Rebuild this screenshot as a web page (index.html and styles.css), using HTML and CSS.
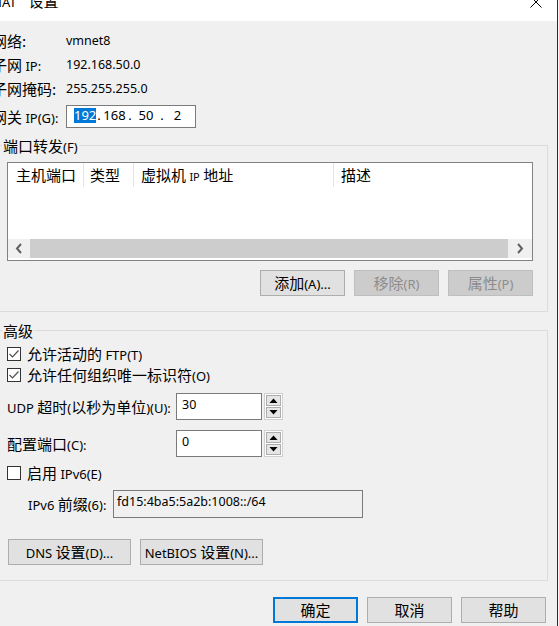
FILE: index.html
```html
<!DOCTYPE html>
<html lang="zh-CN">
<head>
<meta charset="utf-8">
<title>NAT 设置</title>
<link rel="stylesheet" href="styles.css">
</head>
<body>
<div class="window">
  <div class="titlebar">
    <div class="title"><span class="l">NAT</span><span class="tz">设置</span></div>
    <svg class="close" viewBox="0 0 12 12"><path d="M0.5 0.5L11.5 11.5M11.5 0.5L0.5 11.5" stroke="#000" stroke-width="1" fill="none"/></svg>
  </div>
  <div class="content">
    <div class="info">
      <div class="row"><span class="lab">网络:</span><span class="v">vmnet8</span></div>
      <div class="row"><span class="lab">子网 <span class="l">IP:</span></span><span class="v">192.168.50.0</span></div>
      <div class="row"><span class="lab">子网掩码:</span><span class="v">255.255.255.0</span></div>
      <div class="row gw">
        <span class="lab">网关 <span class="l">IP(G):</span></span>
        <div class="ipbox">
          <span class="ipf f1">192</span><span class="ipf dot">.</span><span class="ipf f2">168</span><span class="ipf dot">.</span><span class="ipf f3">50</span><span class="ipf dot">.</span><span class="ipf f4">2</span>
        </div>
      </div>
    </div>

    <fieldset class="group g1">
      <legend>端口转发<span class="l">(F)</span></legend>
      <div class="inner">
        <div class="list">
          <div class="lh">
            <div class="col c1">主机端口</div>
            <div class="col c2">类型</div>
            <div class="col c3">虚拟机 <span class="l ip">IP</span> 地址</div>
            <div class="col c4">描述</div>
          </div>
          <div class="lbody"></div>
          <div class="hscroll">
            <div class="sbtn"><svg width="8" height="11" viewBox="0 0 8 11"><path d="M6 1L2 5.5L6 10" stroke="#606060" stroke-width="2" fill="none"/></svg></div>
            <div class="thumb"></div>
            <div class="sbtn r"><svg width="8" height="11" viewBox="0 0 8 11"><path d="M2 1L6 5.5L2 10" stroke="#606060" stroke-width="2" fill="none"/></svg></div>
          </div>
        </div>
        <div class="btnrow">
          <button class="btn">添加<span class="l">(A)...</span></button>
          <button class="btn dis">移除<span class="l">(R)</span></button>
          <button class="btn dis">属性<span class="l">(P)</span></button>
        </div>
      </div>
    </fieldset>

    <fieldset class="group g2">
      <legend>高级</legend>
      <div class="inner">
        <div class="chk">
          <svg viewBox="0 0 14 14"><rect x="0.5" y="0.5" width="13" height="13" fill="#fff" stroke="#333"/><path d="M2.5 7L5.5 10L11.5 3.5" fill="none" stroke="#505050" stroke-width="1.2"/></svg>
          <span>允许活动的 <span class="l">FTP(T)</span></span>
        </div>
        <div class="chk">
          <svg viewBox="0 0 14 14"><rect x="0.5" y="0.5" width="13" height="13" fill="#fff" stroke="#333"/><path d="M2.5 7L5.5 10L11.5 3.5" fill="none" stroke="#505050" stroke-width="1.2"/></svg>
          <span>允许任何组织唯一标识符<span class="l">(O)</span></span>
        </div>
        <div class="srow">
          <span class="slab"><span class="l">UDP</span> 超时<span class="l">(</span>以秒为单位<span class="l">)(U):</span></span>
          <div class="num v">30</div>
          <div class="spin">
            <div class="sb"><svg width="9" height="5" viewBox="0 0 9 5"><path d="M0.5 5L4.5 0.5L8.5 5Z" fill="#000"/></svg></div>
            <div class="sb"><svg width="9" height="5" viewBox="0 0 9 5"><path d="M0.5 0L4.5 4.5L8.5 0Z" fill="#000"/></svg></div>
          </div>
        </div>
        <div class="srow">
          <span class="slab">配置端口<span class="l">(C):</span></span>
          <div class="num v">0</div>
          <div class="spin">
            <div class="sb"><svg width="9" height="5" viewBox="0 0 9 5"><path d="M0.5 5L4.5 0.5L8.5 5Z" fill="#000"/></svg></div>
            <div class="sb"><svg width="9" height="5" viewBox="0 0 9 5"><path d="M0.5 0L4.5 4.5L8.5 0Z" fill="#000"/></svg></div>
          </div>
        </div>
        <div class="chk v6">
          <svg viewBox="0 0 14 14"><rect x="0.5" y="0.5" width="13" height="13" fill="#fff" stroke="#333"/></svg>
          <span>启用 <span class="l">IPv6(E)</span></span>
        </div>
        <div class="prow">
          <span class="plab"><span class="l">IPv6</span> 前缀<span class="l">(6):</span></span>
          <div class="pinput v">fd15:4ba5:5a2b:1008::/64</div>
        </div>
        <div class="btnrow2">
          <button class="btn wide"><span class="l">DNS</span> 设置<span class="l">(D)...</span></button>
          <button class="btn wide"><span class="l">NetBIOS</span> 设置<span class="l">(N)...</span></button>
        </div>
      </div>
    </fieldset>

    <div class="footer">
      <button class="btn def">确定</button>
      <button class="btn">取消</button>
      <button class="btn">帮助</button>
    </div>
  </div>
</div>
</body>
</html>
```

FILE: styles.css
```css
* { box-sizing: border-box; }
html, body { margin: 0; padding: 0; }
body {
  width: 559px;
  height: 626px;
  overflow: hidden;
  background: #f8f8f8;
  font-family: "Noto Sans CJK SC", "Noto Sans", sans-serif;
  font-size: 15px;
  color: #000;
}
/* latin runs inside CJK labels */
.l {
  font-family: "Noto Sans", "Noto Sans CJK SC", sans-serif;
  font-size: 13px;
  line-height: 1;
}
/* latin values */
.v {
  font-family: "Noto Sans", "Noto Sans CJK SC", sans-serif;
  font-size: 12.5px;
}
.window {
  width: 558px;
  height: 626px;
  background: #f0f0f0;
  border-right: 1px solid #2b2b2b;
  overflow: hidden;
}
.titlebar {
  height: 21px;
  background: #fff;
  display: flex;
  align-items: flex-start;
}
.title {
  margin: -7px 0 0 -8px;
  line-height: 15px;
  white-space: nowrap;
}
.title .tz { margin-left: 12px; }
.close {
  flex: none;
  width: 12px;
  height: 12px;
  margin: -4px 15px 0 auto;
}

/* info */
.info { padding-top: 8px; margin-left: -8px; }
.row {
  display: flex;
  align-items: center;
  height: 24px;
  line-height: 24px;
}
.lab { width: 74px; flex: none; white-space: nowrap; }
.row.gw { margin-top: 4px; height: 23px; }
.ipbox {
  width: 130px;
  height: 23px;
  border: 1px solid #7a7a7a;
  background: #fff;
  display: flex;
  align-items: flex-start;
  padding: 2px 0 0 7px;
}
.ipf {
  font-family: "Noto Sans", sans-serif;
  font-size: 13px;
  line-height: 15px;
  text-align: center;
}
.f1 { width: 22px; background: #0078d7; color: #fff; }
.dot { width: 6px; }
.f2 { width: 25px; }
.f3 { width: 26px; }
.f4 { width: 25px; }

/* group boxes */
.group {
  margin: 0 9px 0 -6px;
  padding: 8px 14px 15px 7px;
  border: 1px solid #dcdcdc;
  min-width: 0;
}
.group legend {
  padding: 0 1px;
  height: 17px;
  line-height: 17px;
}
.g1 { margin-top: 9px; }
.g2 { margin-top: 10px; padding-top: 4px; }
.inner { margin-left: 5px; }

/* list view */
.list {
  height: 99px;
  border: 1px solid #828282;
  background: #fff;
  display: flex;
  flex-direction: column;
}
.lh { display: flex; height: 24px; flex: none; line-height: 24px; }
.col {
  border-right: 1px solid #e5e5e5;
  padding-left: 7px;
  white-space: nowrap;
  flex: none;
}
.c1 { width: 76px; padding-left: 8px; }
.c2 { width: 50px; padding-left: 6px; }
.c3 { width: 200px; }
.c4 { flex: 1; border-right: 0; }
.ip { font-size: 11px; }
.lbody { height: 52px; flex: none; }
.hscroll { display: flex; height: 19px; flex: none; }
.sbtn {
  width: 22px;
  background: #f0f0f0;
  display: flex;
  align-items: center;
  justify-content: center;
}
.sbtn.r { width: 24px; }
.thumb { flex: 1; background: #cdcdcd; }

/* buttons */
.btn {
  width: 85px;
  height: 26px;
  padding: 0;
  margin: 0;
  border: 1px solid #adadad;
  background: #e1e1e1;
  color: #000;
  font: inherit;
  line-height: 22px;
  text-align: center;
  white-space: nowrap;
}
.btn.dis { background: #cccccc; border-color: #bfbfbf; color: #8c8c8c; }
.btn.def { border: 2px solid #0078d7; }
.btn.wide { width: 123px; }
.btnrow {
  display: flex;
  justify-content: flex-end;
  gap: 9px;
  margin-top: 9px;
}

/* checkboxes */
.chk {
  display: flex;
  align-items: center;
  gap: 6px;
  height: 21px;
  line-height: 21px;
}
.chk svg { width: 14px; height: 14px; flex: none; }
.chk.v6 { margin-top: 5px; }

/* spin rows */
.srow {
  display: flex;
  align-items: center;
  height: 27px;
  margin-top: 8px;
}
.srow + .srow { margin-top: 10px; }
.slab { width: 169px; flex: none; white-space: nowrap; line-height: 20px; }
.num {
  width: 86px;
  height: 27px;
  border: 1px solid #7a7a7a;
  background: #fff;
  padding: 3px 5px 0;
  line-height: 15px;
}
.spin {
  width: 19px;
  height: 27px;
  margin-left: 2px;
  border: 1px solid #cfcfcf;
  background: #fff;
  padding: 1px;
  display: flex;
  flex-direction: column;
  gap: 1px;
}
.sb {
  flex: 1;
  border: 1px solid #adadad;
  background: #e5e5e5;
  display: flex;
  align-items: center;
  justify-content: center;
}

/* ipv6 prefix */
.prow {
  display: flex;
  align-items: center;
  height: 28px;
  margin-top: 7px;
}
.plab { margin-left: 21px; width: 85px; flex: none; white-space: nowrap; line-height: 20px; }
.pinput {
  width: 250px;
  height: 28px;
  border: 1px solid #7a7a7a;
  background: #f0f0f0;
  padding: 3px 3px 0;
  line-height: 15px;
}
.btnrow2 {
  display: flex;
  gap: 9px;
  margin: 21px 0 0 1px;
}

/* footer */
.footer {
  display: flex;
  justify-content: flex-end;
  gap: 9px;
  margin-top: 16px;
  padding-right: 11px;
}
```
